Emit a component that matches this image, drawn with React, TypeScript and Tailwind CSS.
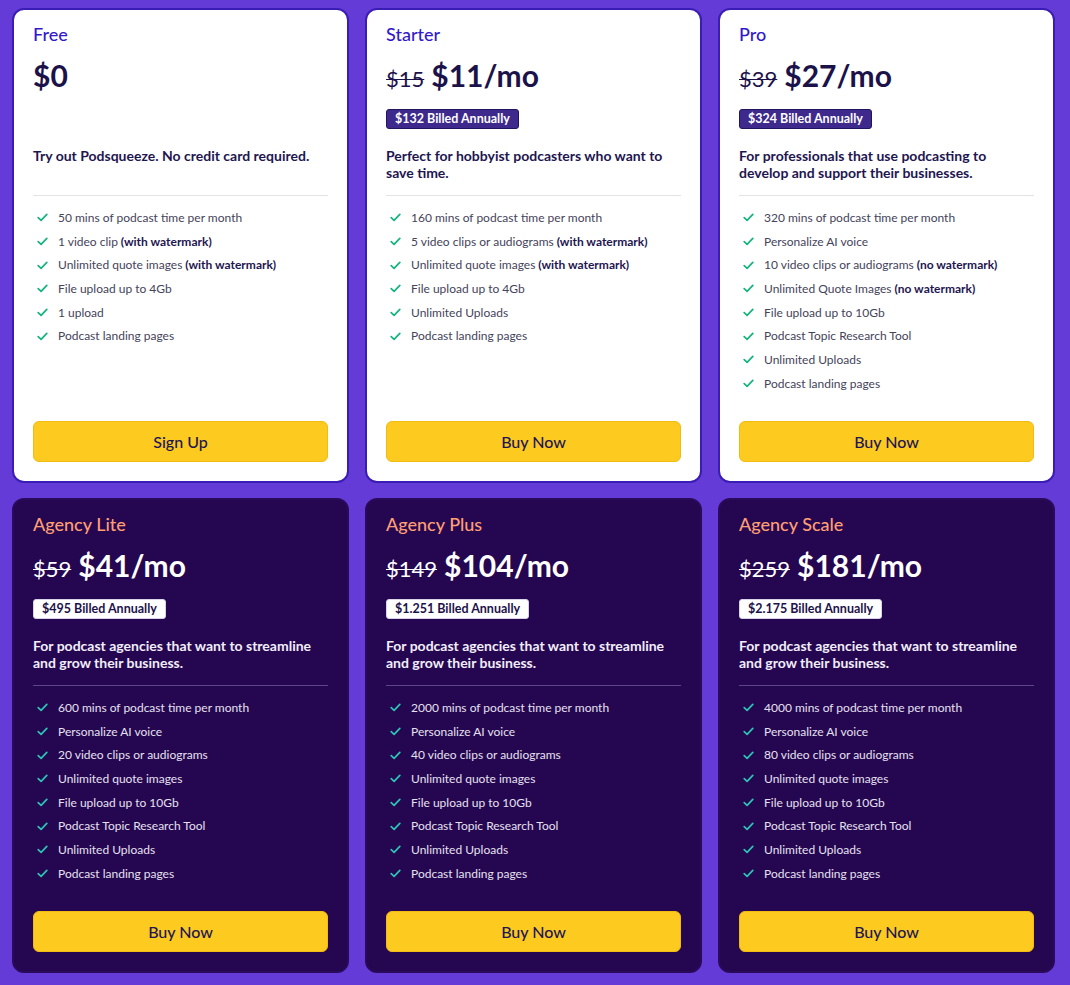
type Plan = {
  name: string;
  old?: string;
  price: string;
  billed?: string;
  desc: string;
  features: { text: string; bold?: string }[];
  cta: string;
  dark?: boolean;
};

const plans: Plan[] = [
  {
    name: 'Free',
    price: '$0',
    desc: 'Try out Podsqueeze. No credit card required.',
    features: [
      { text: '50 mins of podcast time per month' },
      { text: '1 video clip', bold: '(with watermark)' },
      { text: 'Unlimited quote images', bold: '(with watermark)' },
      { text: 'File upload up to 4Gb' },
      { text: '1 upload' },
      { text: 'Podcast landing pages' },
    ],
    cta: 'Sign Up',
  },
  {
    name: 'Starter',
    old: '$15',
    price: '$11/mo',
    billed: '$132 Billed Annually',
    desc: 'Perfect for hobbyist podcasters who want to save time.',
    features: [
      { text: '160 mins of podcast time per month' },
      { text: '5 video clips or audiograms', bold: '(with watermark)' },
      { text: 'Unlimited quote images', bold: '(with watermark)' },
      { text: 'File upload up to 4Gb' },
      { text: 'Unlimited Uploads' },
      { text: 'Podcast landing pages' },
    ],
    cta: 'Buy Now',
  },
  {
    name: 'Pro',
    old: '$39',
    price: '$27/mo',
    billed: '$324 Billed Annually',
    desc: 'For professionals that use podcasting to develop and support their businesses.',
    features: [
      { text: '320 mins of podcast time per month' },
      { text: 'Personalize AI voice' },
      { text: '10 video clips or audiograms', bold: '(no watermark)' },
      { text: 'Unlimited Quote Images', bold: '(no watermark)' },
      { text: 'File upload up to 10Gb' },
      { text: 'Podcast Topic Research Tool' },
      { text: 'Unlimited Uploads' },
      { text: 'Podcast landing pages' },
    ],
    cta: 'Buy Now',
  },
];

const agency = (name: string, old: string, price: string, billed: string, mins: string, clips: string): Plan => ({
  name,
  old,
  price,
  billed,
  desc: 'For podcast agencies that want to streamline and grow their business.',
  features: [
    { text: `${mins} mins of podcast time per month` },
    { text: 'Personalize AI voice' },
    { text: `${clips} video clips or audiograms` },
    { text: 'Unlimited quote images' },
    { text: 'File upload up to 10Gb' },
    { text: 'Podcast Topic Research Tool' },
    { text: 'Unlimited Uploads' },
    { text: 'Podcast landing pages' },
  ],
  cta: 'Buy Now',
  dark: true,
});

plans.push(
  agency('Agency Lite', '$59', '$41/mo', '$495 Billed Annually', '600', '20'),
  agency('Agency Plus', '$149', '$104/mo', '$1.251 Billed Annually', '2000', '40'),
  agency('Agency Scale', '$259', '$181/mo', '$2.175 Billed Annually', '4000', '80'),
);

function Check({ dark }: { dark?: boolean }) {
  return (
    <svg width="11" height="9" viewBox="0 0 11 9" fill="none" className="shrink-0">
      <path
        d="M1.2 4.6 L4.1 7.3 L9.8 1.4"
        stroke={dark ? '#2ec4b6' : '#14b37d'}
        strokeWidth="1.7"
        strokeLinecap="round"
        strokeLinejoin="round"
      />
    </svg>
  );
}

function Card({ p }: { p: Plan }) {
  const d = p.dark;
  return (
    <div
      className={
        'h-[475px] rounded-xl flex flex-col border-2 px-[19px] pt-[12px] pb-[19px] ' +
        (d ? 'bg-[#250651] border-[#2a0a5a]' : 'bg-white border-[#3a1db4]')
      }
    >
      <div className={'text-[18px] leading-6 font-medium ' + (d ? 'text-[#ff9f73]' : 'text-[#3319c9]')}>{p.name}</div>
      <div className="mt-[11px] flex items-baseline gap-[7px] h-9">
        {p.old && (
          <span className={'text-[22px] line-through decoration-1 ' + (d ? 'text-white' : 'text-[#1c124a]')}>{p.old}</span>
        )}
        <span className={'text-[30px] leading-9 font-bold ' + (d ? 'text-white' : 'text-[#1c124a]')}>{p.price}</span>
      </div>
      <div className="mt-[12px] h-5">
        {p.billed && (
          <span
            className={
              'inline-block h-5 px-[8px] rounded-[3px] text-[12.5px] leading-[18px] font-bold ' +
              (d ? 'bg-white text-[#1c124a] border border-[#d8d3e8]' : 'bg-[#3e2a8c] text-white border border-[#22145e]')
            }
          >
            {p.billed}
          </span>
        )}
      </div>
      <p
        className={
          'mt-[22px] h-[34px] text-[14px] leading-[17px] font-bold pr-2 ' + (d ? 'text-[#f1eef9]' : 'text-[#1e1650]')
        }
      >
        {p.desc}
      </p>
      <div className={'mt-[14px] h-px ' + (d ? 'bg-[#5d4688]' : 'bg-[#e2e2e8]')} />
      <ul className="pt-[10px]">
        {p.features.map((f) => (
          <li key={f.text} className="flex items-center gap-[10px] h-[23.7px] pl-[4px]">
            <Check dark={d} />
            <span className={'text-[12px] ' + (d ? 'text-[#e6e1f0]' : 'text-[#45435a]')}>
              {f.text}
              {f.bold && <b className={'font-bold ' + (d ? 'text-white' : 'text-[#1e1650]')}> {f.bold}</b>}
            </span>
          </li>
        ))}
      </ul>
      <button className="mt-auto h-[41px] w-full rounded-md bg-[#fdca20] border border-[#f2bb12] text-[16px] font-medium text-[#221552]">
        {p.cta}
      </button>
    </div>
  );
}

export default function App() {
  return (
    <div className="min-h-[985px] bg-[#643bd6] pl-3 pr-[15px] pt-2 pb-3" style={{ fontFamily: "Lato, 'Open Sans', sans-serif" }}>
      <div className="grid grid-cols-3 gap-x-4 gap-y-[15px]">
        {plans.map((p) => (
          <Card key={p.name} p={p} />
        ))}
      </div>
    </div>
  );
}
